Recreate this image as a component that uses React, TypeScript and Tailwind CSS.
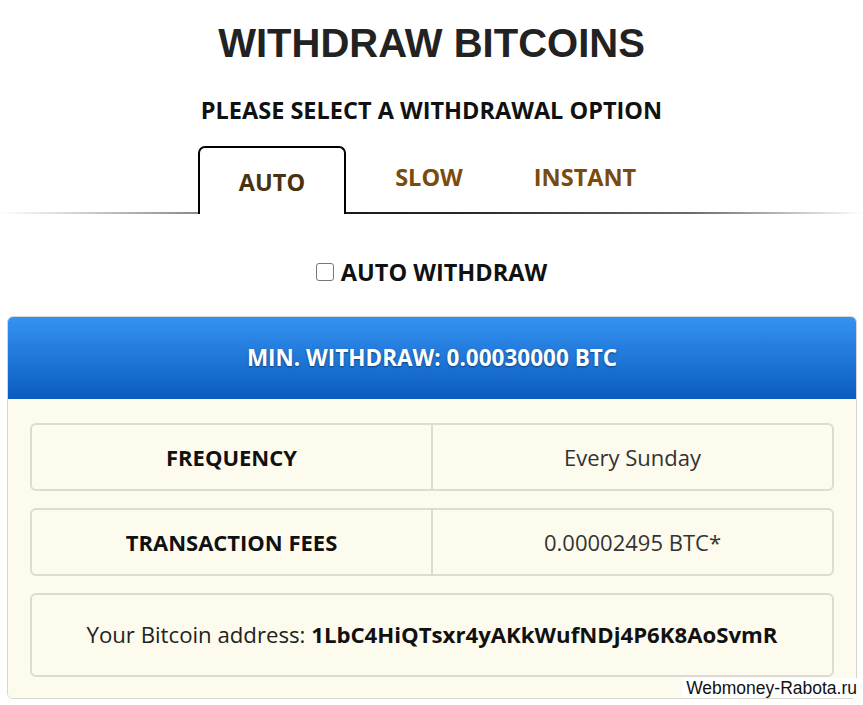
export default function App() {
  const rows = [
    { label: "FREQUENCY", value: "Every Sunday" },
    { label: "TRANSACTION FEES", value: "0.00002495 BTC*" },
  ];

  return (
    <div className="relative w-[863px] h-[705px] bg-white overflow-hidden font-['Open_Sans',sans-serif] text-[#222]">
      <h1 className="pt-[19px] text-center font-['Liberation_Sans',Arial,sans-serif] text-[40px] leading-[48px] font-bold text-[#222]">
        WITHDRAW BITCOINS
      </h1>
      <h2 className="mt-[27px] text-center text-[23.5px] leading-[32px] font-bold text-[#111]">
        PLEASE SELECT A WITHDRAWAL OPTION
      </h2>

      {/* tabs */}
      <div className="relative mt-[20px] h-[68px]">
        <div className="absolute left-0 right-0 bottom-0 h-[2px] bg-[linear-gradient(to_right,#ffffff_0%,#8a8a8a_23%,#1a1a1a_40%,#2a2a2a_55%,#6a6a6a_80%,#ffffff_100%)]" />
        <div className="flex h-full pl-[198px]">
          <div className="relative w-[148px] h-full border-2 border-b-0 border-black rounded-t-[7px] bg-white flex items-center justify-center pt-[4px]">
            <span className="text-[23.5px] font-bold text-[#4a3210]">AUTO</span>
          </div>
          <div className="w-[166px] flex items-center justify-center pb-[4px]">
            <span className="text-[23.5px] font-bold text-[#7a4b0c]">SLOW</span>
          </div>
          <div className="w-[146px] flex items-center justify-center pb-[4px]">
            <span className="text-[23.5px] font-bold text-[#7a4b0c]">INSTANT</span>
          </div>
        </div>
      </div>

      {/* auto withdraw */}
      <div className="mt-[42px] flex items-center justify-center gap-[7px]">
        <span className="w-[18px] h-[18px] border border-[#777] rounded-[3px] bg-white" />
        <span className="text-[23.5px] leading-[32px] font-bold text-[#111]">AUTO WITHDRAW</span>
      </div>

      {/* panel */}
      <div className="mt-[28px] ml-[7px] w-[850px] rounded-[6px] border border-[#d7d7cf] overflow-hidden">
        <div className="h-[82px] bg-[linear-gradient(to_bottom,#3592f1,#0a5cbf)] flex items-center justify-center">
          <span className="text-[22.5px] font-bold text-white [text-shadow:0_1px_2px_rgba(0,0,0,0.45)]">
            MIN. WITHDRAW: 0.00030000 BTC
          </span>
        </div>
        <div className="bg-[#fdfbed] px-[22px] pt-[24px] pb-[21px] flex flex-col gap-[17px]">
          {rows.map((r) => (
            <div key={r.label} className="h-[68px] flex border-2 border-[#dcdcd3] rounded-[6px]">
              <div className="w-[401px] flex items-center justify-center border-r-2 border-[#dcdcd3] text-[22px] font-bold text-[#111]">
                {r.label}
              </div>
              <div className="flex-1 flex items-center justify-center text-[22px] text-[#333]">
                {r.value}
              </div>
            </div>
          ))}
          <div className="h-[84px] flex items-center justify-center border-2 border-[#dcdcd3] rounded-[6px] text-[22.2px] text-[#222]">
            <span>
              Your Bitcoin address: <span className="font-bold text-[#111]">1LbC4HiQTsxr4yAKkWufNDj4P6K8AoSvmR</span>
            </span>
          </div>
        </div>
      </div>

      <div className="absolute right-[6px] bottom-[7px] bg-white pl-[4px] font-['Liberation_Sans',Arial,sans-serif] text-[17.5px] leading-[20px] text-[#111]">
        Webmoney-Rabota.ru
      </div>
    </div>
  );
}
